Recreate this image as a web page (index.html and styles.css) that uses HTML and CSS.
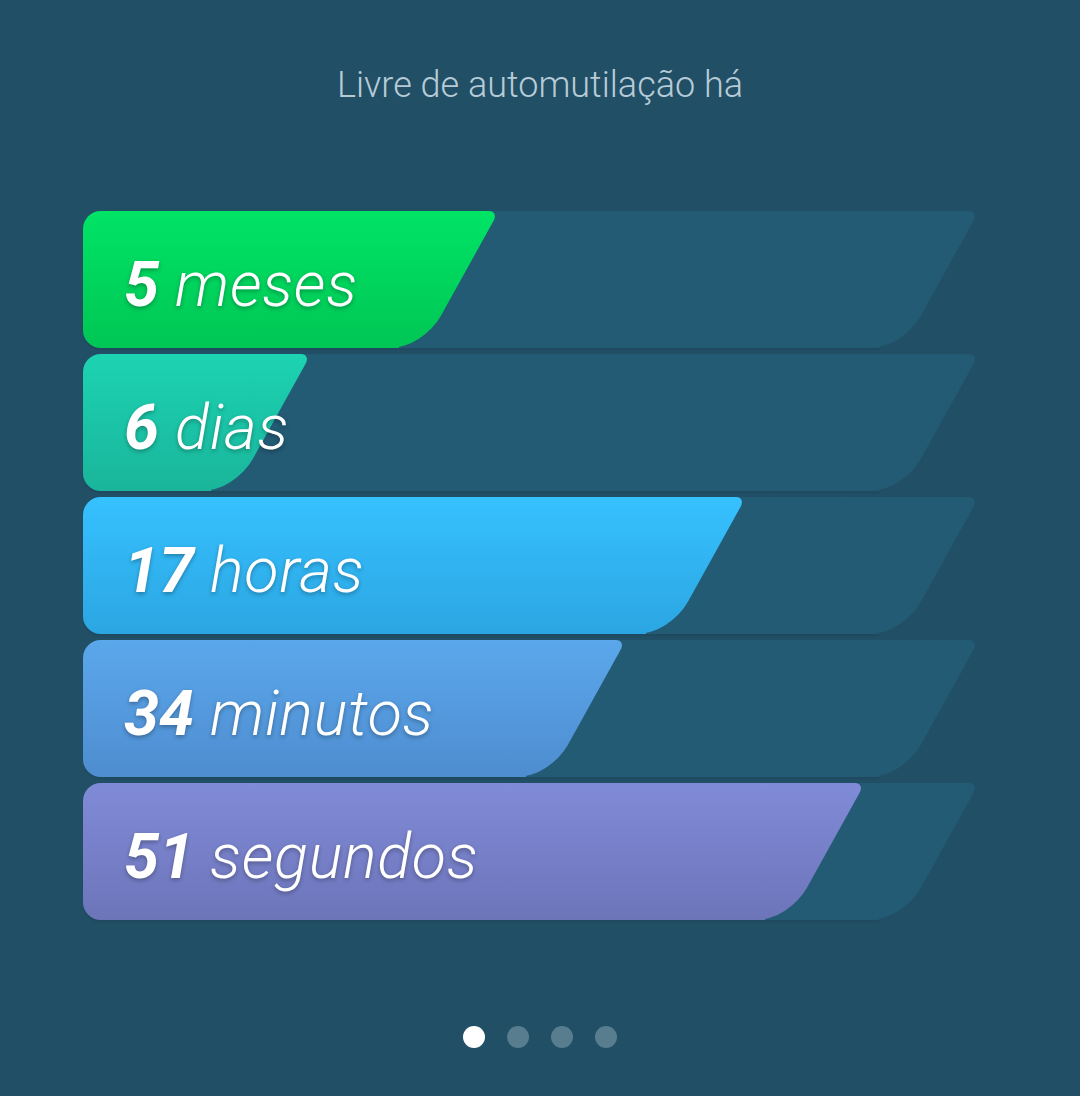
FILE: index.html
```html
<!DOCTYPE html>
<html lang="pt">
<head>
  <meta charset="UTF-8" />
  <meta name="viewport" content="width=device-width, initial-scale=1.0"/>
  <title>Livre de automutilação</title>
  <link rel="stylesheet" href="styles.css">
</head>
<body>
  <main class="screen">
    <h1 class="title">Livre de automutilação há</h1>

    <div class="bars">
      <div class="row">
        <div class="shape track"></div>
        <div class="shape fill green" style="width: 316px"></div>
        <div class="label"><b>5</b> meses</div>
      </div>
      <div class="row">
        <div class="shape track"></div>
        <div class="shape fill teal" style="width: 128px"></div>
        <div class="label"><b>6</b> dias</div>
      </div>
      <div class="row">
        <div class="shape track"></div>
        <div class="shape fill sky" style="width: 563px"></div>
        <div class="label"><b>17</b> horas</div>
      </div>
      <div class="row">
        <div class="shape track"></div>
        <div class="shape fill blue" style="width: 443px"></div>
        <div class="label"><b>34</b> minutos</div>
      </div>
      <div class="row">
        <div class="shape track"></div>
        <div class="shape fill purple" style="width: 682px"></div>
        <div class="label"><b>51</b> segundos</div>
      </div>
    </div>

    <div class="dots">
      <span class="dot active"></span>
      <span class="dot"></span>
      <span class="dot"></span>
      <span class="dot"></span>
    </div>
  </main>
</body>
</html>
```

FILE: styles.css
```css
body {
  margin: 0;
  background: #214f66;
  font-family: Roboto, "Noto Sans", sans-serif;
}

.screen {
  height: 1096px;
  display: flex;
  flex-direction: column;
}

.title {
  margin: 62px 0 0;
  text-align: center;
  font-size: 36px;
  font-weight: 300;
  line-height: 46px;
  color: #b7cbd6;
}

.bars {
  margin: 103px 0 0 83px;
  width: 892px;
  display: flex;
  flex-direction: column;
  gap: 6px;
}

.row {
  display: grid;
  height: 137px;
}

.row > * {
  grid-area: 1 / 1;
}

/* bar with a rounded left end and a slanted right end */
.shape {
  position: relative;
  z-index: 0;
  height: 137px;
  border-radius: 18px 0 0 18px;
}

.shape::after {
  content: '';
  position: absolute;
  z-index: -1;
  top: 0;
  right: -100px;
  width: 130px;
  height: 100%;
  background: inherit;
  border-radius: 0 10px 32px 0;
  transform: skewX(-29deg);
  transform-origin: top center;
}

.track {
  width: 796px;
  background: #235a74;
  box-shadow: 0 2px 2px rgba(0,0,0,0.08);
}

.green  { background: linear-gradient(#00e466, #00c655); }
.teal   { background: linear-gradient(#1cd3b2, #1ab59b); }
.sky    { background: linear-gradient(#36c1ff, #2ba6e2); }
.blue   { background: linear-gradient(#5ba7ec, #4e8dcf); }
.purple { background: linear-gradient(#808bd8, #6d75b9); }

.label {
  position: relative;
  z-index: 1;
  align-self: start;
  padding: 42px 0 0 41px;
  color: #fff;
  font-size: 63px;
  font-style: italic;
  font-weight: 300;
  line-height: 1;
  letter-spacing: 0.7px;
  white-space: nowrap;
  text-shadow: 0 2px 4px rgba(0,0,0,0.3);
}

.label b {
  font-weight: 700;
  letter-spacing: 0;
}

.dots {
  margin: auto 0 48px;
  display: flex;
  justify-content: center;
  gap: 22px;
}

.dot {
  width: 22px;
  height: 22px;
  border-radius: 50%;
  background: #587d8e;
}

.dot.active {
  background: #fff;
}
```
